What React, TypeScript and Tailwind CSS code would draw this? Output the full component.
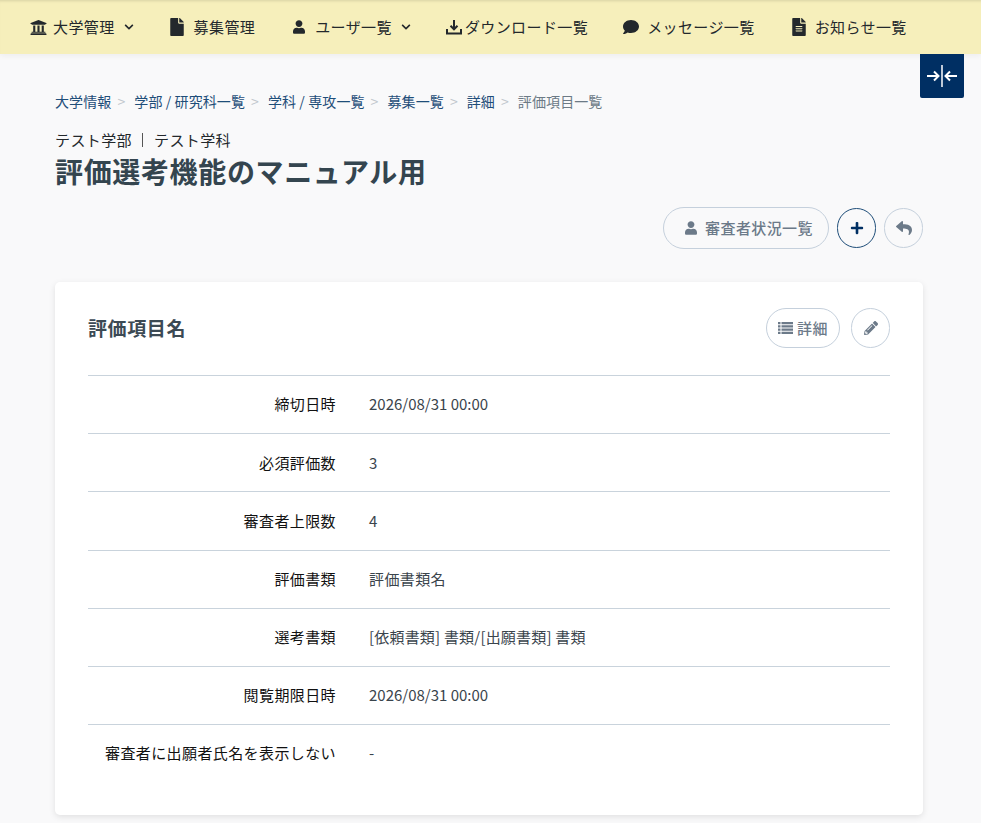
import React from 'react';
import { FaUniversity, FaFile, FaUser, FaChevronDown, FaComment, FaFileAlt, FaPlus, FaReply, FaPencilAlt } from 'react-icons/fa';

const navItems = [
  { label: '大学管理', icon: <FaUniversity size={17} />, caret: 'ml-[3px]', gap: 'gap-[6px]', after: 'mr-[36px]' },
  { label: '募集管理', icon: <FaFile className="h-[18px] w-[14px]" />, gap: 'gap-[10px]', after: 'mr-[38px]' },
  { label: 'ユーザ一覧', icon: <FaUser className="h-[14px] w-[12px]" />, caret: 'ml-[-1px]', gap: 'gap-[10px]', after: 'mr-[35px]' },
  { label: 'ダウンロード一覧', icon: <DownloadIcon />, gap: 'gap-[3px]', after: 'mr-[35px]' },
  { label: 'メッセージ一覧', icon: <FaComment size={16} />, gap: 'gap-[8px]', after: 'mr-[37px]' },
  { label: 'お知らせ一覧', icon: <FaFileAlt className="h-[18px] w-[14px]" />, gap: 'gap-[9px]', after: '' }
];

const crumbs = ['大学情報', '学部 / 研究科一覧', '学科 / 専攻一覧', '募集一覧', '詳細'];

const rows = [
  { label: '締切日時', value: '2026/08/31 00:00', tracking: 'tracking-normal' },
  { label: '必須評価数', value: '3', tracking: 'tracking-normal' },
  { label: '審査者上限数', value: '4', tracking: 'tracking-normal' },
  { label: '評価書類', value: '評価書類名', tracking: 'tracking-[0.4px]' },
  { label: '選考書類', value: '[依頼書類] 書類/[出願書類] 書類', tracking: 'tracking-[0.2px]' },
  { label: '閲覧期限日時', value: '2026/08/31 00:00', tracking: 'tracking-normal' },
  { label: '審査者に出願者氏名を表示しない', value: '-', tracking: 'tracking-normal' }
];

function DownloadIcon() {
  return (
    <svg width="16" height="16" viewBox="0 0 16 16" fill="none" stroke="currentColor" strokeWidth="2">
      <path d="M8 1v9M4.5 6.8 8 10.3l3.500-3.500" />
      <path d="M1 10v4.500h14V10" />
    </svg>
  );
}

function CollapseIcon() {
  return (
    <svg width="30" height="22" viewBox="0 0 30 22" fill="none" stroke="white" strokeWidth="2">
      <path d="M15 0v22" strokeWidth="1.500" />
      <path d="M0 11h11M7 6.500l4.500 4.500L7 15.500" />
      <path d="M30 11H19M23 6.500 18.500 11l4.500 4.500" />
    </svg>
  );
}

function ListIcon() {
  return (
    <svg width="15" height="12" viewBox="0 0 15 12" fill="currentColor">
      <path d="M0 0h2.500v2.300H0zM3.500 0H15v2.300H3.500zM0 3.200h2.500v2.300H0zM3.500 3.200H15v2.300H3.500zM0 6.500h2.500v2.300H0zM3.500 6.500H15v2.300H3.500zM0 9.700h2.500V12H0zM3.500 9.700H15V12H3.500z" />
    </svg>
  );
}

export default function App() {
  return (
    <div className="relative min-h-[823px] bg-[#f9f9fa] text-[#23282c] font-['Noto_Sans_CJK_JP','Noto_Sans',sans-serif]">
      {/* Top nav */}
      <nav className="flex h-[54px] items-center bg-[#f6efbb] pl-[30px] text-[15px] tracking-[0.4px] text-[#23282c] shadow-[inset_0_3px_3px_-2px_rgba(0,0,0,0.12),0_2px_6px_rgba(0,0,0,0.05)]">
        {navItems.map(item => (
          <div key={item.label} className={`flex items-center ${item.gap} ${item.after}`}>
            {item.icon}
            <span>{item.label}</span>
            {item.caret && <FaChevronDown size={10} className={item.caret} />}
          </div>
        ))}
      </nav>

      {/* Sidebar toggle */}
      <button className="absolute right-[17px] top-[54px] flex h-[44px] w-[44px] items-center justify-center rounded-b-[2px] bg-[#002f63]">
        <CollapseIcon />
      </button>

      <main className="pl-[55px] pr-[58px]">
        {/* Breadcrumb */}
        <div className="flex items-center pt-[36px] text-[14px] leading-[22px] tracking-[0.1px] text-[#1f4e79]">
          {crumbs.map(c => (
            <React.Fragment key={c}>
              <span>{c}</span>
              <span className="mx-[6px] pr-[3px] text-[#c0c6cc]">&gt;</span>
            </React.Fragment>
          ))}
          <span className="text-[#6c7a86]">評価項目一覧</span>
        </div>

        {/* Heading */}
        <div className="mt-[18px] text-[15px] leading-[20px] tracking-[0.4px] text-[#23282c]">
          テスト学部<span className="ml-[10px] mr-[11px] inline-block h-[14px] w-px bg-[#555] align-[-1px]" />テスト学科
        </div>
        <h1 className="mt-[1px] text-[28px] font-bold leading-[40px] tracking-[0.65px] text-[#34454f]">評価選考機能のマニュアル用</h1>

        {/* Actions */}
        <div className="mt-[16px] flex items-center justify-end gap-[8px]">
          <button className="flex h-[42px] w-[166px] items-center justify-center gap-[8px] rounded-full border border-[#c5d0dc] pl-[6px] text-[15px] font-medium tracking-[0.4px] text-[#6c7a89]">
            <FaUser className="h-[14px] w-[12px]" />
            審査者状況一覧
          </button>
          <button className="flex h-[40px] w-[39px] items-center justify-center rounded-full border border-[#1f4e79] text-[#002f63]">
            <FaPlus size={14} />
          </button>
          <button className="flex h-[40px] w-[39px] items-center justify-center rounded-full border border-[#c5d0dc] text-[#6c7a89]">
            <FaReply size={16} />
          </button>
        </div>

        {/* Card */}
        <section className="mt-[33px] rounded-[5px] bg-white px-[33px] pb-[33px] shadow-[0_2px_6px_rgba(0,0,0,0.1)]">
          <div className="flex h-[93px] items-center justify-between pb-[1px]">
            <h2 className="text-[19px] font-bold tracking-[0.6px] text-[#3c4a54]">評価項目名</h2>
            <div className="flex items-center gap-[11px]">
              <button className="flex h-[40px] w-[74px] items-center justify-center gap-[4px] rounded-full border border-[#c5d0dc] text-[15px] font-medium tracking-[0.4px] text-[#6c7a89]">
                <ListIcon />
                詳細
              </button>
              <button className="flex h-[40px] w-[39px] items-center justify-center rounded-full border border-[#c5d0dc] text-[#6c7a89]">
                <FaPencilAlt size={14} />
              </button>
            </div>
          </div>
          {rows.map(row => (
            <div key={row.label} className="flex h-[58.2px] items-center border-t border-[#c9d3dc] text-[15px]">
              <div className="w-[248px] text-right tracking-[0.4px] text-[#111]">{row.label}</div>
              <div className={`ml-[33px] text-[#3a444c] ${row.tracking}`}>{row.value}</div>
            </div>
          ))}
        </section>
      </main>
    </div>
  );
}
